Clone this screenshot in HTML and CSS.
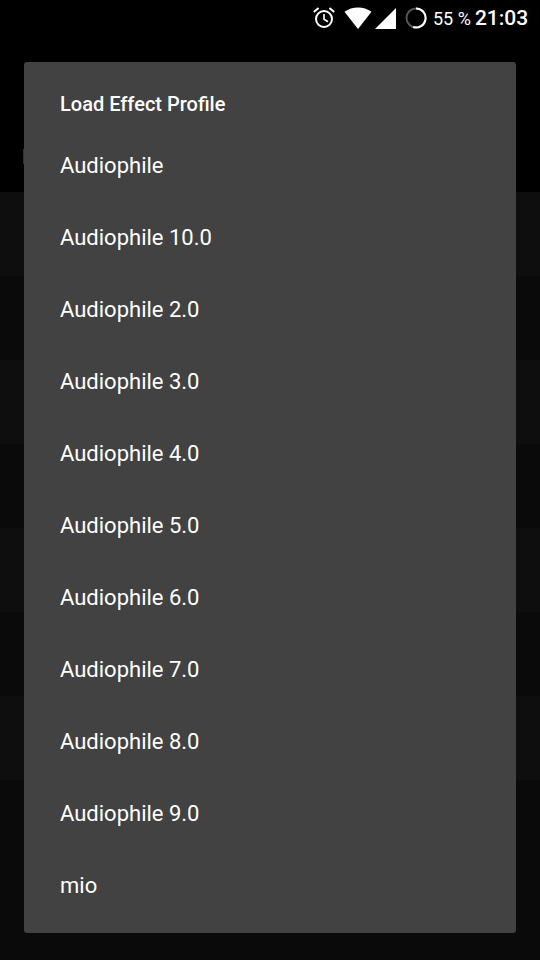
FILE: index.html
```html
<!DOCTYPE html>
<html lang="en">
<head>
<meta charset="utf-8">
<title>Load Effect Profile</title>
<link rel="stylesheet" href="styles.css">
</head>
<body>
<div class="screen">
  <div class="backdrop">
    <div class="appbar"><i class="tick"></i></div>
    <div class="band b1"></div><div class="band b2 alt"></div><div class="band b3"></div><div class="band b4 alt"></div><div class="band b5"></div><div class="band b6 alt"></div><div class="band b7"></div><div class="band b8 alt"></div>
  </div>
  <header class="status">
    <svg class="alarm" width="24" height="24" viewBox="0 0 24 24" fill="none" stroke="#fff" stroke-width="2"><circle cx="12" cy="13" r="8"/><path d="M12 8v5.3l4 2.4" stroke-width="1.6"/><path d="M1.8 6 6.6 2M22.2 6 17.4 2"/></svg>
    <svg class="wifi" width="28" height="22" viewBox="0 0 28 22" fill="#fff"><path d="M14 22 .5 4.8Q6.500 .5 14 .5T27.500 4.800Z"/></svg>
    <svg class="signal" width="21" height="21" viewBox="0 0 21 21" fill="#fff"><path d="M0 21H21V0Z"/></svg>
    <svg class="battery" width="22" height="22" viewBox="0 0 22 22" fill="none" stroke-width="2"><circle cx="11" cy="11" r="9.500" stroke="#555"/><path d="M11 1.500A9.500 9.500 0 1 1 8.100 20" stroke="#fff"/></svg>
    <span class="percent">55 %</span>
    <span class="clock">21:03</span>
  </header>
  <main class="dialog">
    <h1>Load Effect Profile</h1>
    <ul>
      <li>Audiophile</li>
      <li>Audiophile 10.0</li>
      <li>Audiophile 2.0</li>
      <li>Audiophile 3.0</li>
      <li>Audiophile 4.0</li>
      <li>Audiophile 5.0</li>
      <li>Audiophile 6.0</li>
      <li>Audiophile 7.0</li>
      <li>Audiophile 8.0</li>
      <li>Audiophile 9.0</li>
      <li>mio</li>
    </ul>
  </main>
</div>
</body>
</html>
```
FILE: styles.css
```css
* { box-sizing: border-box; }
body { margin: 0; background: #000; color: #fff; font-family: Roboto, sans-serif; }
.screen { position: relative; width: 540px; height: 960px; overflow: hidden; }
.backdrop { position: absolute; inset: 0; display: flex; flex-direction: column; }
.appbar { height: 192px; padding: 149px 0 0 23px; background: #000; }
.tick { display: block; width: 2px; height: 15px; background: #333; }
.band { height: 84px; background: #0e0e0e; }
.band.alt { background: #0a0a0a; }
.b8 { flex: 1; }
.status { position: relative; display: flex; align-items: center; height: 36px; padding-left: 312px; }
.wifi { margin-left: 8px; }
.signal { margin-left: 3px; }
.battery { margin-left: 9px; }
.percent { margin-left: 6px; font-size: 18px; white-space: nowrap; }
.clock { margin-left: 4px; font-size: 21px; font-weight: 500; }
.dialog { position: relative; width: 492px; height: 871px; margin: 26px 24px 0; padding-top: 27px; background: #424242; border-radius: 3px; }
h1 { margin: 0; padding-left: 36px; font-size: 20px; line-height: 30px; font-weight: 500; }
ul { margin: 11px 0 0; padding: 0; list-style: none; }
li { height: 72px; padding-left: 36px; font-size: 22px; line-height: 72px; margin: 0; }
ul { margin-top: 11px; }
```
